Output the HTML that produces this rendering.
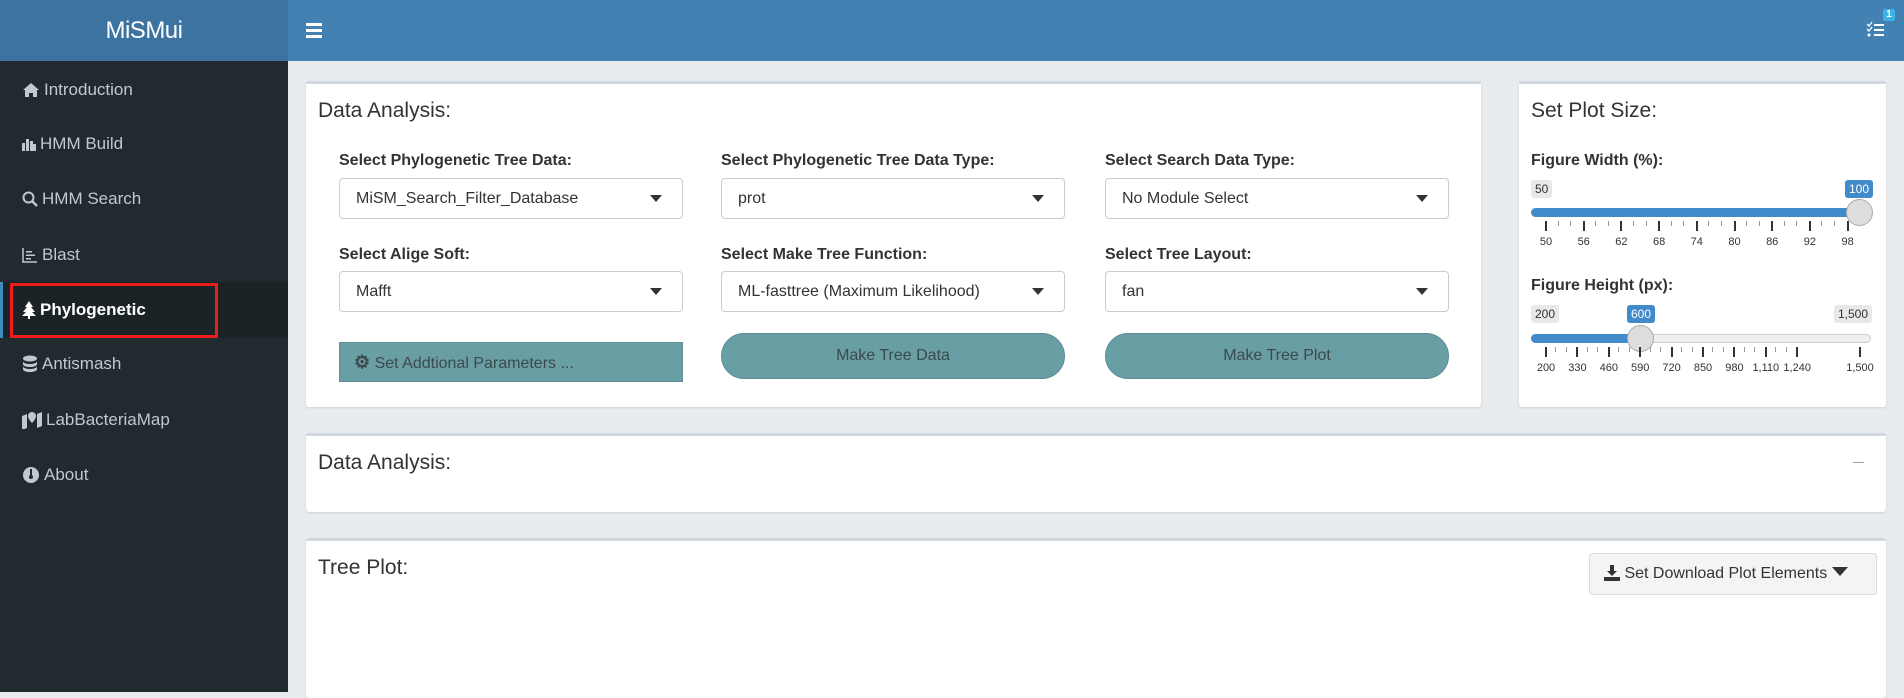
<!DOCTYPE html>
<html><head><meta charset="utf-8"><style>
*{box-sizing:border-box;margin:0;padding:0}
body{width:1904px;height:692px;overflow:hidden;background:#e9ecef;font-family:"Liberation Sans",sans-serif;position:relative;color:#212529}
.a{position:absolute}
#logo{left:0;top:0;width:288px;height:61px;background:#3c73a0;color:#fff;font-size:24px;text-align:center;line-height:61px;letter-spacing:-0.5px}
#hdr{left:288px;top:0;right:0;height:61px;background:#4281b2}
#side{left:0;top:61px;width:288px;bottom:0;background:#212a2e}
.mi{position:absolute;left:22px;color:#c2c7d0;font-size:17px;height:24px;line-height:24px;display:flex;align-items:center;gap:4px}
.mi svg{fill:#c2c7d0}
.box{position:absolute;background:#fff;border-top:3px solid #d2d6de;border-radius:3px;box-shadow:0 1px 2px rgba(0,0,0,.12)}
.ttl{position:absolute;font-size:21px;color:#333}
.lbl{position:absolute;font-size:16px;font-weight:bold;color:#333}
.sel{position:absolute;height:41px;border:1px solid #ccc;border-radius:4px;background:#fff;font-size:16px;line-height:39px;padding-left:16px;color:#333}
.sel:after{content:"";position:absolute;right:20px;top:16px;border-left:6px solid transparent;border-right:6px solid transparent;border-top:7px solid #333}
.btn{position:absolute;background:#6a9ea5;color:#3a4a4d;font-size:16px;text-align:center;border:1px solid #5d9097}
.tk{position:absolute;width:1px;background:#999}
.num{position:absolute;font-size:11px;color:#333;transform:translateX(-50%)}
.pill{position:absolute;font-size:12px;padding:2px 4px;border-radius:3px;background:#e8e8e8;color:#333}
.pb{background:#428bca;color:#fff}
</style></head><body>
<div id="logo" class="a">MiSMui</div>
<div id="hdr" class="a">
 <div class="a" style="left:18px;top:23px;width:16px;height:3px;background:#fff;box-shadow:0 6px 0 #fff,0 12px 0 #fff"></div>
 <svg class="a" style="left:1578px;top:20px" width="24" height="20"><g fill="#fff"><rect x="8" y="4" width="10" height="2"/><rect x="8" y="9" width="10" height="2"/><rect x="8" y="14" width="10" height="2"/><circle cx="3" cy="15" r="1.5"/><path d="M1 4l2 2 3-4" stroke="#fff" fill="none" stroke-width="1.3"/><path d="M1 9l2 2 3-4" stroke="#fff" fill="none" stroke-width="1.3"/></g></svg>
 <div class="a" style="left:1595px;top:9px;width:12px;height:12px;background:#3cb3e6;color:#fff;font-size:10px;font-weight:bold;text-align:center;line-height:12px;border-radius:2px">1</div>
</div>
<div id="side" class="a">
 <div class="a" style="left:0;top:221px;width:288px;height:56px;background:#1c2326;border-left:3px solid #3c8dbc"></div>
 <div class="a" style="left:10px;top:222px;width:208px;height:55px;border:3px solid #ee1c1c"></div>
 <div class="mi" style="top:17px"><svg width="18" height="16"><path d="M9 1L1 8h2v7h4v-4h4v4h4V8h2z"/></svg>Introduction</div>
 <div class="mi" style="top:71px"><svg width="14" height="16"><rect x="0" y="7" width="3" height="8"/><rect x="4" y="3" width="3" height="12"/><rect x="8" y="5" width="3" height="10"/><rect x="11" y="8" width="3" height="7"/></svg>HMM Build</div>
 <div class="mi" style="top:126px"><svg width="16" height="16"><circle cx="6.5" cy="6.5" r="5" fill="none" stroke="#c2c7d0" stroke-width="2"/><path d="M10 10l5 5" stroke="#c2c7d0" stroke-width="2.4"/></svg>HMM Search</div>
 <div class="mi" style="top:182px"><svg width="16" height="16"><path d="M1 1v14h14" fill="none" stroke="#c2c7d0" stroke-width="1.5"/><rect x="4" y="4" width="6" height="1.5"/><rect x="4" y="7.5" width="9" height="1.5"/><rect x="4" y="11" width="5" height="1.5"/></svg>Blast</div>
 <div class="mi" style="top:237px;color:#fff;font-weight:bold"><svg width="14" height="18"><path d="M7 0L3 6h2L1 11h3L0 15h6v3h2v-3h6l-4-4h3L9 6h2z" fill="#fff"/></svg>Phylogenetic</div>
 <div class="mi" style="top:291px"><svg width="16" height="18"><ellipse cx="8" cy="3.5" rx="7" ry="3"/><path d="M1 6c0 4 14 4 14 0v3c0 4-14 4-14 0zM1 11c0 4 14 4 14 0v3c0 4-14 4-14 0z"/></svg>Antismash</div>
 <div class="mi" style="top:347px"><svg width="20" height="18"><path d="M0 5l5-2v14l-5 2zM15 3l5-2v14l-5 2z"/><path d="M10 1a4 4 0 014 4c0 3-4 7-4 7s-4-4-4-7a4 4 0 014-4z"/></svg>LabBacteriaMap</div>
 <div class="mi" style="top:402px"><svg width="18" height="18"><circle cx="9" cy="9" r="8"/><path d="M9 3v8" stroke="#212a2e" stroke-width="2"/><circle cx="9" cy="11" r="2" fill="#212a2e"/></svg>About</div>
</div>

<div class="box" style="left:306px;top:81px;width:1175px;height:326px">
 <div class="ttl" style="left:12px;top:15px">Data Analysis:</div>
 <div class="lbl" style="left:33px;top:68px">Select Phylogenetic Tree Data:</div>
 <div class="lbl" style="left:415px;top:68px">Select Phylogenetic Tree Data Type:</div>
 <div class="lbl" style="left:799px;top:68px">Select Search Data Type:</div>
 <div class="sel" style="left:33px;top:94px;width:344px">MiSM_Search_Filter_Database</div>
 <div class="sel" style="left:415px;top:94px;width:344px">prot</div>
 <div class="sel" style="left:799px;top:94px;width:344px">No Module Select</div>
 <div class="lbl" style="left:33px;top:162px">Select Alige Soft:</div>
 <div class="lbl" style="left:415px;top:162px">Select Make Tree Function:</div>
 <div class="lbl" style="left:799px;top:162px">Select Tree Layout:</div>
 <div class="sel" style="left:33px;top:187px;width:344px">Mafft</div>
 <div class="sel" style="left:415px;top:187px;width:344px">ML-fasttree (Maximum Likelihood)</div>
 <div class="sel" style="left:799px;top:187px;width:344px">fan</div>
 <div class="btn" style="left:33px;top:258px;width:344px;height:40px;line-height:38px;text-align:left;padding-left:14px"><b style="font-size:18px">⚙</b> Set Addtional Parameters ...</div>
 <div class="btn" style="left:415px;top:249px;width:344px;height:46px;line-height:44px;border-radius:23px">Make Tree Data</div>
 <div class="btn" style="left:799px;top:249px;width:344px;height:46px;line-height:44px;border-radius:23px">Make Tree Plot</div>
</div>

<div class="box" style="left:1519px;top:81px;width:367px;height:326px">
 <div class="ttl" style="left:12px;top:15px">Set Plot Size:</div>
 <div class="lbl" style="left:12px;top:68px">Figure Width (%):</div>
 <div class="pill" style="left:12px;top:96px">50</div>
 <div class="pill pb" style="left:326px;top:96px">100</div>
 <div class="a" style="left:12px;top:124px;width:340px;height:9px;background:#428bca;border-radius:5px"></div>
 <div class="a" style="left:327px;top:115px;width:27px;height:27px;border-radius:50%;background:#ddd;border:1px solid #aaa"></div>
 <div class="lbl" style="left:12px;top:193px">Figure Height (px):</div>
 <div class="pill" style="left:12px;top:221px">200</div>
 <div class="pill pb" style="left:108px;top:221px">600</div>
 <div class="pill" style="left:315px;top:221px">1,500</div>
 <div class="a" style="left:12px;top:250px;width:340px;height:9px;background:#eee;border:1px solid #ccc;border-radius:5px"></div>
 <div class="a" style="left:12px;top:250px;width:110px;height:9px;background:#428bca;border-radius:5px"></div>
 <div class="a" style="left:108px;top:241px;width:27px;height:27px;border-radius:50%;background:#ddd;border:1px solid #aaa"></div>
 <div id="t1"></div><div id="t2"></div>
</div>

<div class="box" style="left:306px;top:433px;width:1580px;height:79px">
 <div class="ttl" style="left:12px;top:15px">Data Analysis:</div>
 <div class="a" style="left:1547px;top:26px;width:11px;height:1px;background:#97a0b3"></div>
</div>
<div class="box" style="left:306px;top:538px;width:1580px;height:160px">
 <div class="ttl" style="left:12px;top:15px">Tree Plot:</div>
 <div class="a" style="left:1283px;top:12px;width:288px;height:42px;background:#f4f4f4;border:1px solid #ddd;border-radius:3px;font-size:16px;line-height:40px;padding-left:14px;color:#333">
  <svg style="vertical-align:-3px" width="16" height="16"><path d="M6 0h4v6h3l-5 5-5-5h3z" fill="#333"/><rect x="0" y="12" width="16" height="4" fill="#333"/></svg> Set Download Plot Elements
  <span style="display:inline-block;border-left:8px solid transparent;border-right:8px solid transparent;border-top:9px solid #333;vertical-align:2px"></span></div>
</div>
<script>
function ticks(id,top,start,step,n,minor,labels){
 var h='';for(var i=0;i<n;i++){var x=start+i*step;h+='<div class="tk" style="left:'+x+'px;top:'+top+'px;height:10px;background:#333;width:2px"></div>';
 h+='<div class="num" style="left:'+(x+1)+'px;top:'+(top+15)+'px">'+labels[i]+'</div>';
 if(i<n-1)for(var j=1;j<=minor;j++){h+='<div class="tk" style="left:'+(x+j*step/(minor+1))+'px;top:'+top+'px;height:5px"></div>';}}
 document.getElementById(id).innerHTML=h;}
ticks('t1',137,26,37.7,9,2,[50,56,62,68,74,80,86,92,98]);
ticks('t2',263,26,31.4,9,2,[200,330,460,590,720,850,980,'1,110','1,240']);
document.getElementById('t2').innerHTML+='<div class="tk" style="left:340px;top:263px;height:10px;background:#333;width:2px"></div><div class="num" style="left:341px;top:278px">1,500</div>';
</script>
</body></html>
